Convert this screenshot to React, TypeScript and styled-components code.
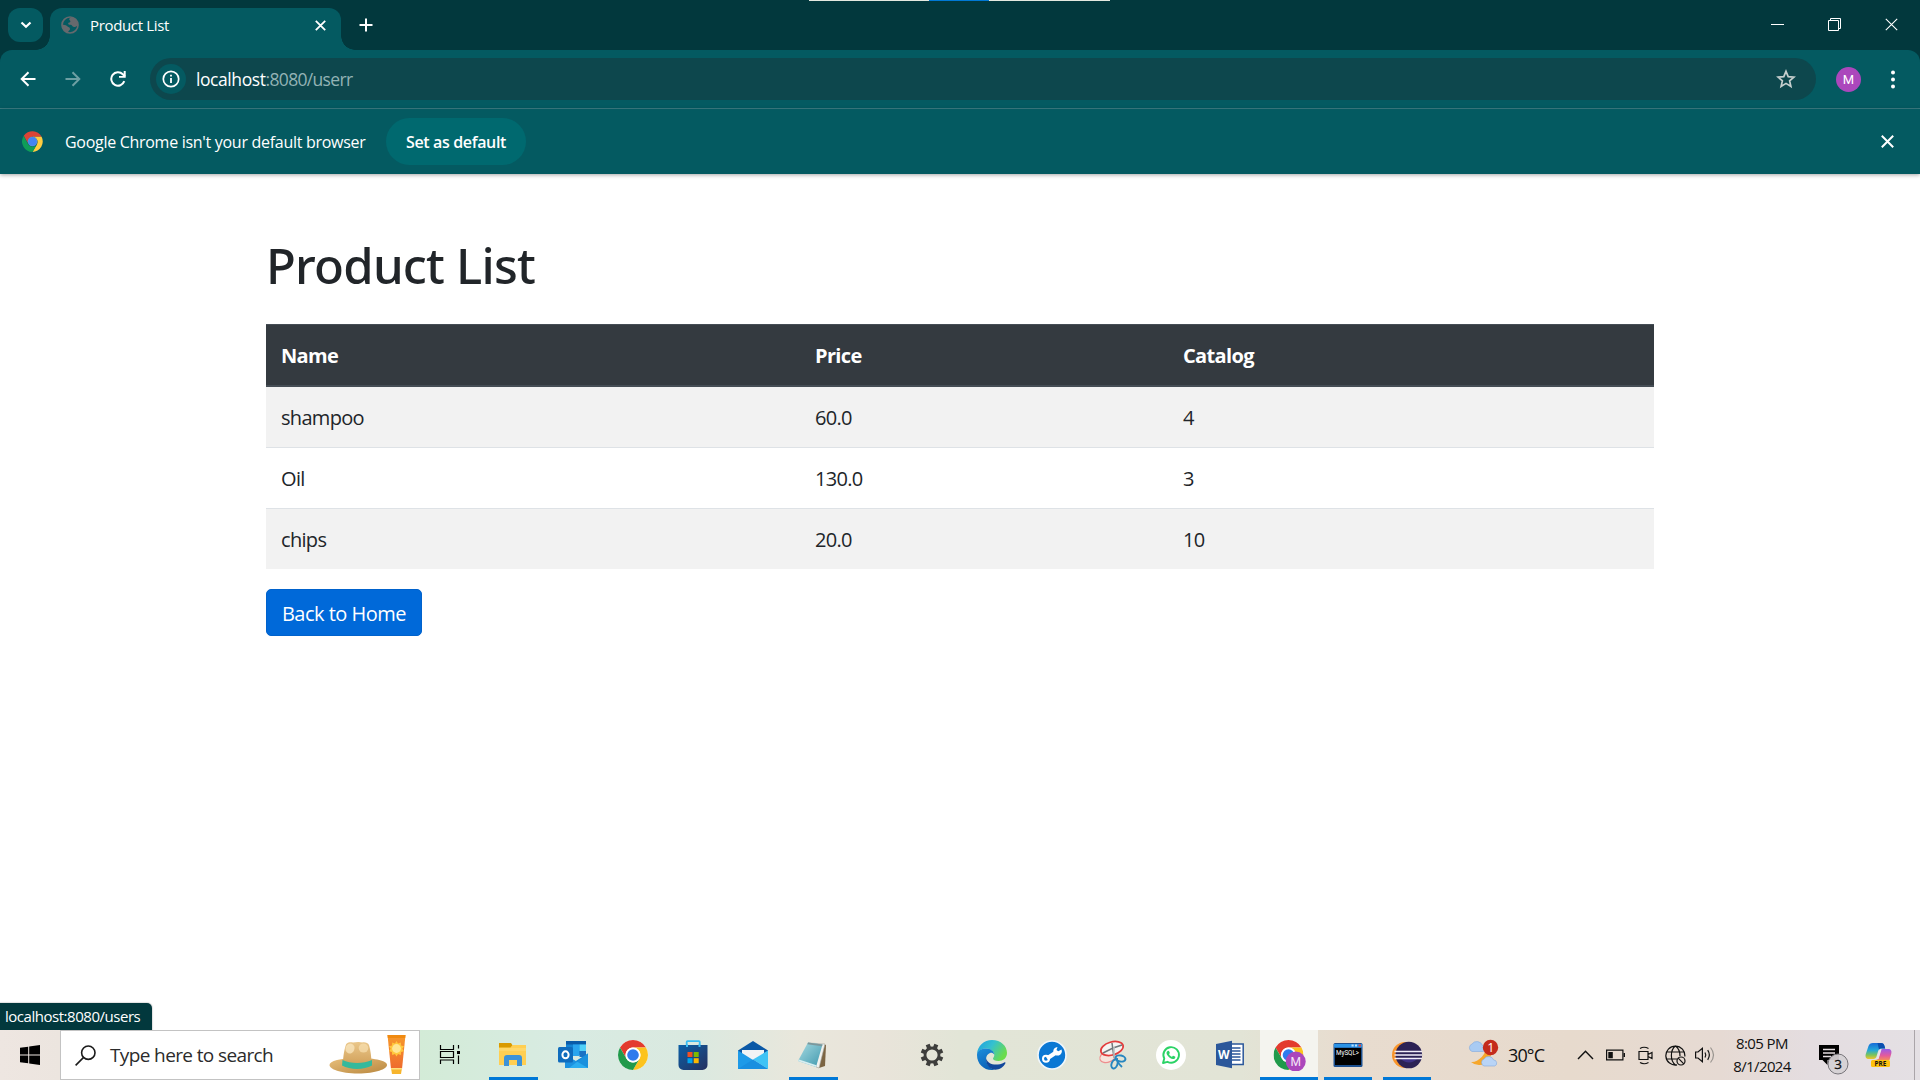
import React from 'react';
import styled, { createGlobalStyle, css } from 'styled-components';

const GlobalStyle = createGlobalStyle`
  * { box-sizing: border-box; }
  html, body { margin: 0; padding: 0; overflow: hidden; background: #fff; }
  body { font-family: 'Open Sans', 'Noto Sans', sans-serif; }
`;

const Screen = styled.div`
  width: 1920px;
  height: 1080px;
  display: flex;
  flex-direction: column;
  background: #fff;
  overflow: hidden;
  white-space: nowrap;
`;

/* ---------- browser: tab strip ---------- */

const TabStrip = styled.header`
  position: relative;
  height: 50px;
  flex: none;
  display: flex;
  align-items: flex-end;
  padding-left: 8px;
  background: #02383d;
`;

const SnapHint = styled.div`
  position: absolute;
  top: 0;
  left: 809px;
  width: 301px;
  height: 1px;
  background: linear-gradient(to right, #e4e9e0 120px, #0078d4 120px 180px, #e4e9e0 180px);
`;

const TabSearch = styled.button`
  width: 35px;
  height: 34px;
  margin: 0 7px 8px 0;
  padding: 0;
  border: 0;
  border-radius: 12px;
  background: #045a61;
  display: grid;
  place-items: center;
`;

const flare = css`
  content: '';
  position: absolute;
  bottom: 0;
  width: 14px;
  height: 14px;
`;

const Tab = styled.div`
  position: relative;
  width: 291px;
  height: 42.5px;
  display: flex;
  align-items: center;
  padding: 0 15px 7px 11px;
  border-radius: 12px 12px 0 0;
  background: #045a61;
  color: #fff;
  &::before {
    ${flare}
    right: 100%;
    background: radial-gradient(circle at 0 0, transparent 13.5px, #045a61 14px);
  }
  &::after {
    ${flare}
    left: 100%;
    background: radial-gradient(circle at 100% 0, transparent 13.5px, #045a61 14px);
  }
`;

const TabTitle = styled.span`
  flex: 1;
  margin-left: 11px;
  font-size: 15px;
  line-height: 20px;
  letter-spacing: -0.34px;
`;

const NewTab = styled.div`
  width: 50px;
  height: 50px;
  display: grid;
  place-items: center;
`;

const WindowControls = styled.div`
  margin-left: auto;
  display: flex;
  height: 50px;
`;

const WindowControl = styled.div`
  width: 57px;
  height: 49px;
  display: grid;
  place-items: center;
`;

/* ---------- browser: toolbar ---------- */

const ToolbarBack = styled.div`
  flex: none;
  background: #02383d;
`;

const Toolbar = styled.div`
  height: 59px;
  display: flex;
  align-items: center;
  padding: 0 11px 0 5px;
  border-radius: 12px 12px 0 0;
  border-bottom: 1px solid #3b7e84;
  background: #045a61;
`;

const NavButton = styled.div<{ $dim?: boolean }>`
  width: 45px;
  height: 42px;
  display: grid;
  place-items: center;
  opacity: ${(p) => (p.$dim ? 0.42 : 1)};
`;

const Omnibox = styled.div`
  flex: 1;
  height: 42px;
  margin: 0 20px 0 10px;
  display: flex;
  align-items: center;
  padding: 0 20px 0 6px;
  border-radius: 21px;
  background: #0d474d;
`;

const SiteInfo = styled.span`
  width: 30px;
  height: 30px;
  border-radius: 50%;
  background: #045a61;
  display: grid;
  place-items: center;
`;

const Url = styled.span`
  flex: 1;
  margin-left: 10px;
  font-size: 17.5px;
  line-height: 24px;
  letter-spacing: -0.42px;
  color: #fff;
`;

const UrlPath = styled.span`
  letter-spacing: -0.67px;
  color: #93b3b5;
`;

const Avatar = styled.span`
  width: 25px;
  height: 25px;
  border-radius: 50%;
  background: #ab47bc;
  color: #fff;
  font: 400 13px/25px Roboto, sans-serif;
  text-align: center;
`;

const MenuDots = styled.span`
  width: 33px;
  margin: 0 0 0 15px;
  display: grid;
  place-items: center;
`;

/* ---------- browser: info bar ---------- */

const InfoBar = styled.div`
  position: relative;
  z-index: 1;
  flex: none;
  height: 65px;
  display: flex;
  align-items: center;
  padding: 0 26px 0 22px;
  background: #045a61;
  color: #fff;
  box-shadow: 0 1px 4px rgba(0, 0, 0, 0.35);
`;

const InfoText = styled.span`
  margin-left: 22px;
  width: 321px;
  font-size: 16px;
  letter-spacing: -0.29px;
`;

const DefaultButton = styled.button`
  width: 140px;
  height: 47px;
  padding: 0;
  border: 0;
  border-radius: 24px;
  background: #00696f;
  color: #fff;
  font: 600 16px 'Open Sans', sans-serif;
  letter-spacing: -0.35px;
`;

const InfoClose = styled.div`
  margin-left: auto;
  display: grid;
`;

/* ---------- page ---------- */

const Page = styled.main`
  position: relative;
  flex: 1;
  padding: 61px 266px 0;
  color: #212529;
`;

const Heading = styled.h1`
  margin: 0 0 29px;
  font: 500 49px/60px 'Noto Sans', sans-serif;
  letter-spacing: -0.77px;
`;

const ProductTable = styled.div`
  display: flex;
  flex-direction: column;
  font-size: 20px;
  line-height: 30px;
`;

const Row = styled.div<{ $head?: boolean; $striped?: boolean; $first?: boolean }>`
  display: grid;
  grid-template-columns: 534px 368px 1fr;
  padding: 16px 0 14px;
  letter-spacing: -0.68px;
  border-top: ${(p) => (p.$first ? '0' : '1px solid #dee2e6')};
  background: ${(p) => (p.$striped ? '#f2f2f2' : '#fff')};
  ${(p) =>
    p.$head &&
    css`
      border-top: 1px solid #454d55;
      border-bottom: 2px solid #454d55;
      background: #343a40;
      color: #fff;
      font-weight: 700;
      letter-spacing: -0.65px;
    `}
`;

const Cell = styled.span`
  padding-left: 15px;
`;

const HomeButton = styled.a`
  display: inline-block;
  margin-top: 20px;
  width: 156px;
  height: 47px;
  border: 1px solid #0062cc;
  border-radius: 5px;
  background: #0069d9;
  color: #fff;
  font-size: 20px;
  line-height: 47px;
  text-align: center;
  letter-spacing: -0.51px;
`;

const StatusBubble = styled.div`
  position: absolute;
  left: 0;
  bottom: 0;
  width: 152px;
  height: 27px;
  padding-left: 5px;
  border-radius: 0 5px 0 0;
  background: #02383d;
  box-shadow: 0 0 1px 1px rgba(0, 0, 0, 0.12);
  color: #fff;
  font-size: 15px;
  line-height: 27px;
  letter-spacing: -0.47px;
`;

/* ---------- taskbar ---------- */

const Taskbar = styled.footer`
  position: relative;
  z-index: 1;
  flex: none;
  height: 50px;
  display: flex;
  background: linear-gradient(
    to right,
    #eee6e1 0, #ece5df 60px, #d3ebd7 420px, #d8ebe2 560px, #dae9e0 690px, #e9e7dc 800px,
    #e9e4da 880px, #e2e5d7 960px, #e2e4d6 1240px, #e8dccf 1350px, #e7dacd 1570px,
    #e6dad3 1720px, #e4dde0 1810px, #e4e0e4 1920px
  );
`;

const StartButton = styled.div`
  width: 60px;
  display: grid;
  place-items: center;
`;

const SearchBox = styled.div`
  width: 360px;
  display: flex;
  align-items: center;
  padding: 0 12px 0 14px;
  border: 1px solid #c3c3c3;
  background: #fff;
`;

const SearchHint = styled.span`
  flex: 1;
  margin-left: 14px;
  font-size: 19px;
  line-height: 26px;
  letter-spacing: -0.62px;
  color: #2b2b2b;
`;

const Slot = styled.div<{ $w?: number; $gap?: number; $active?: boolean }>`
  width: ${(p) => p.$w ?? 60}px;
  margin-left: ${(p) => p.$gap ?? 0}px;
  flex: none;
  display: flex;
  flex-direction: column;
  align-items: center;
  padding-top: 9px;
  background: ${(p) => (p.$active ? '#f4f4ef' : 'transparent')};
`;

const Running = styled.div<{ $w?: number }>`
  width: ${(p) => p.$w ?? 49}px;
  height: 3px;
  margin-top: 6px;
  background: #0078d7;
`;

const Weather = styled.div`
  margin-left: 31px;
  width: 105px;
  display: flex;
  align-items: center;
  font-size: 18px;
  letter-spacing: -0.86px;
  color: #111;
`;

const Temperature = styled.span`
  margin-left: 9px;
`;

const Tray = styled.div`
  width: 148px;
  display: flex;
  align-items: center;
`;

const Clock = styled.div`
  width: 84px;
  display: flex;
  flex-direction: column;
  align-items: center;
  padding-top: 2px;
  font-size: 15px;
  line-height: 23px;
  letter-spacing: -0.6px;
  color: #111;
`;

const TrayIcon = styled.div<{ $w: number }>`
  width: ${(p) => p.$w}px;
  display: grid;
  place-items: center;
`;

const Notifications = styled.div`
  width: 46px;
  margin-left: 7px;
  padding-top: 8px;
  display: grid;
  place-items: center;
`;

const ShowDesktop = styled.div`
  margin-left: auto;
  width: 6px;
  border-left: 1px solid #aaa5a9;
`;

/* ---------- icons ---------- */

const Icon = ({ size = 32, children }: { size?: number; children: React.ReactNode }) => (
  <svg width={size} height={size} viewBox="0 0 32 32" fill="none" display="block">
    {children}
  </svg>
);

const Cross = ({ size, width = 1.9 }: { size: number; width?: number }) => (
  <svg width={size} height={size} viewBox={`0 0 ${size} ${size}`} stroke="#fff" strokeWidth={width}>
    <path d={`M.8 .8 ${size - 0.8} ${size - 0.8}M${size - 0.8} .8 .8 ${size - 0.8}`} />
  </svg>
);

const ChromeMark = ({ size }: { size: number }) => (
  <svg width={size} height={size} viewBox="0 0 48 48" display="block">
    <circle cx="24" cy="24" r="24" fill="#fff" />
    <path d="M24 12h20.78A24 24 0 0 0 3.22 12l10.39 18A12 12 0 0 1 24 12z" fill="#e33b2e" />
    <path d="M34.39 30 24 48A24 24 0 0 0 44.78 12H24a12 12 0 0 1 10.39 18z" fill="#fcc31e" />
    <path d="M13.61 30 3.22 12A24 24 0 0 0 24 48l10.39-18a12 12 0 0 1-20.78 0z" fill="#219a4b" />
    <circle cx="24" cy="24" r="12" fill="#fff" />
    <circle cx="24" cy="24" r="9.3" fill="#2f7bed" />
  </svg>
);

const TaskbarChrome = () => (
  <Icon>
    <g transform="translate(1 1)"><ChromeMark size={30} /></g>
  </Icon>
);

const InfoChrome = () => (
  <svg width="21" height="21" viewBox="0 0 48 48" display="block">
    <path d="M24 13h20.8A24 24 0 0 0 4 11l10 18A12 12 0 0 1 24 13z" fill="#db4437" />
    <path d="M34.39 30 24 48A24 24 0 0 0 44.78 13H24a12 12 0 0 1 10.39 17z" fill="#ffcd40" />
    <path d="M14 30 4 11A24 24 0 0 0 24 48l10.39-18A12 12 0 0 1 14 30z" fill="#0f9d58" />
    <circle cx="24" cy="24" r="11" fill="#5b8fe0" />
    <circle cx="24" cy="24" r="9" fill="#4285f4" />
  </svg>
);

const SearchArt = () => (
  <svg width="78" height="44" viewBox="0 0 78 44" display="block">
    <defs>
      <linearGradient id="brim" x1="0" y1="0" x2="1" y2="1">
        <stop stopColor="#e8c07c" />
        <stop offset="1" stopColor="#b9873f" />
      </linearGradient>
      <linearGradient id="crown" x1="0" y1="0" x2="0" y2="1">
        <stop stopColor="#eac78a" />
        <stop offset="1" stopColor="#cf9d56" />
      </linearGradient>
      <linearGradient id="tube" x1="0" y1="0" x2="0" y2="1">
        <stop stopColor="#f79a2c" />
        <stop offset="1" stopColor="#ee6a2e" />
      </linearGradient>
    </defs>
    <path d="M.5 32C.5 28 11 25 29 25s29 3 29 7-11 8.500-29 8.500S.5 36 .5 32z" fill="url(#brim)" />
    <path d="M14 31c0-8 1.500-15 3-19.500 1-2.500 5-2.500 7-2 3-.8 7-.8 9 0 3-.6 6 .2 7 2.500 1.500 5 2.500 12 2.500 19-8 4-21 4-28.500 0z" fill="url(#crown)" />
    <path d="M13.500 27c8 4 21 4 29.500 0v5.500c-8 4.500-22 4.500-30 0z" fill="#35b99c" />
    <ellipse cx="21" cy="15.500" rx="4.500" ry="5" fill="#fbe9c5" opacity=".7" transform="rotate(20 21 15.500)" />
    <ellipse cx="34.500" cy="15" rx="4.800" ry="4.500" fill="#f8dfb0" opacity=".7" />
    <path d="M58.500 2h18L73 36H62z" fill="url(#tube)" />
    <path d="M58.500 2h18l-.3 3H58.800z" fill="#f08a10" />
    <path d="m67.500 8 1.500 2.500 2.800-1 .2 3 3 .8-1.700 2.500 1.700 2.500-3 .8-.2 3-2.800-1-1.500 2.500-1.500-2.500-2.800 1-.2-3-3-.8 1.700-2.500-1.700-2.500 3-.8.2-3 2.800 1z" fill="#ffc83d" />
    <circle cx="67.500" cy="15.500" r="4.400" fill="#ffe694" />
    <path d="M62 35h11l-1 6H63z" fill="#f7b52d" />
    <path d="M62 35h11v1.500H62z" fill="#ffdf7c" />
  </svg>
);

const Explorer = () => (
  <Icon>
    <path d="M2 4h12l2 3-2 3H2z" fill="#d99a00" />
    <path d="M2 8.500h11.500L15.500 6H29v20H2z" fill="#ffcf52" />
    <path d="M2 9h27v3H2z" fill="#ffdc78" opacity=".6" />
    <path d="M7 27v-8a3 3 0 0 1 3-3h12a3 3 0 0 1 3 3v8h-5v-6h-8v6z" fill="#3d93d8" />
  </Icon>
);

const Outlook = () => (
  <Icon>
    <path d="M9 2h20v14H9z" fill="#1384d4" />
    <path d="M9 2h20v3.500H9z" fill="#0a5ba8" />
    <path d="M16 5.500h6.500V11H16zM16 11h6.500v6H16z" fill="#2aa5ee" />
    <path d="M22.500 5.500H29V12h-6.500z" fill="#50d0f8" />
    <path d="M22.500 12H29v6h-6.500z" fill="#1a72c4" />
    <path d="M8 16 19 22l12-7.500V29H8z" fill="#1b91e0" />
    <path d="M31 14.500V29H12z" fill="#2badf0" />
    <path d="M31 14.500V29l-12-7z" fill="#1181d2" opacity=".65" />
    <rect x="1" y="8" width="15" height="15.500" rx="1.500" fill="#0f6cbd" />
    <ellipse cx="8.500" cy="15.800" rx="3.100" ry="3.500" stroke="#fff" strokeWidth="2" />
  </Icon>
);

const Store = () => (
  <Icon>
    <defs>
      <linearGradient id="store" x1="0" y1="0" x2="1" y2="1">
        <stop stopColor="#0b5fa6" />
        <stop offset="1" stopColor="#26305f" />
      </linearGradient>
    </defs>
    <path d="M9.700 8V3a.8.8 0 0 1 .8-.8h11.400a.8.8 0 0 1 .8.800v5" stroke="#3bbcf2" strokeWidth="1.800" />
    <path d="M1.500 6h29v20a5 5 0 0 1-5 5h-19a5 5 0 0 1-5-5z" fill="url(#store)" />
    <path d="M9 5.500h2V8H9zM21.500 5.500h2V8h-2z" fill="#3bbcf2" />
    <path d="M10.500 13h5v5h-5z" fill="#f25022" />
    <path d="M16.700 13h5v5h-5z" fill="#7fba00" />
    <path d="M10.500 19.200h5v5h-5z" fill="#00a4ef" />
    <path d="M16.700 19.200h5v5h-5z" fill="#ffb900" />
  </Icon>
);

const Mail = () => (
  <Icon>
    <path d="M1 11.500 16 2l15 9.500V14H1z" fill="#0a58a6" />
    <path d="M5 11h22v4L16 22 5 15z" fill="#f1f3f5" />
    <path d="M1 11.500 16 21l15 9H1z" fill="#1d9ae8" />
    <path d="M31 11.500V30L16 20.500z" fill="#3fc3f5" />
    <path d="M1 30 16 20.500 31 30z" fill="#188fe0" />
  </Icon>
);

const Notepad = () => (
  <Icon>
    <defs>
      <linearGradient id="note" x1="0" y1="0" x2="1" y2="1">
        <stop stopColor="#a8dbe2" />
        <stop offset="1" stopColor="#3f98ae" />
      </linearGradient>
    </defs>
    <path d="m26 5 3 1-1 21-6 2z" fill="#7c6543" />
    <path d="m11 4 17 1-6 24-3-1z" fill="#f2f2ee" stroke="#a3a59e" strokeWidth=".6" />
    <path d="m11 3.500 14.500 2L19 28 1 22z" fill="url(#note)" />
    <path d="m11 3.500 14.500 2-.5 1.800-14.500-2z" fill="#7c979b" />
    <path d="m1 22 18 6 .5-1.800L2 20.500z" fill="#d7eef1" />
  </Icon>
);

const GearIcon = () => (
  <Icon>
    <g stroke="#3e3e3c" strokeWidth="4.200">
      {[22.5, 67.5, 112.5, 157.5].map((a) => (
        <path key={a} d="M16 4.700v5M16 22.300v5" transform={`rotate(${a} 16 16)`} />
      ))}
    </g>
    <circle cx="16" cy="16" r="7" stroke="#3e3e3c" strokeWidth="2.800" />
  </Icon>
);

const Edge = () => (
  <Icon>
    <defs>
      <linearGradient id="edgeTop" x1="0" y1="0" x2="1" y2=".5">
        <stop stopColor="#1b9de2" />
        <stop offset=".5" stopColor="#35c1cf" />
        <stop offset="1" stopColor="#6bdc4b" />
      </linearGradient>
      <linearGradient id="edgeSide" x1="0" y1="0" x2=".4" y2="1">
        <stop stopColor="#1b8fdc" />
        <stop offset="1" stopColor="#0c63b8" />
      </linearGradient>
    </defs>
    <path d="M1 15C1.500 7 8 1 16 1c9 0 15 6 15 13 0 5-4 8-8.500 8-3.500 0-5.500-1.200-5.500-2.300 0-.9 1.300-1.600 1.300-3.700 0-3.500-3.500-6.500-8.300-6.500C5.500 9.500 2 12 1 15z" fill="url(#edgeTop)" />
    <path d="M1 16c0-4 4-6.500 9-6.500 4.800 0 8.300 3 8.300 6.200-1-1.700-3-2.200-4.300-1.700-3 1-4.500 4.500-3.700 8 .9 4.500 4.500 7.500 8.200 8.700C9.500 32.500 1 26 1 16z" fill="url(#edgeSide)" />
    <path d="M10.200 19.500c-.8 6 4 11 9.300 11.200 4 0 8-2.700 9.800-6.200.5-1-.3-1.500-1-1.100C20.500 27.500 11.500 25.500 10.200 19.500z" fill="#11479b" />
  </Icon>
);

const Wrench = () => (
  <Icon>
    <circle cx="16" cy="16" r="14" fill="#0b78d4" stroke="#f0f7fc" strokeWidth="1.600" />
    <path d="m11 19.500 9-6" stroke="#fff" strokeWidth="4.200" />
    <circle cx="10" cy="19.700" r="3" stroke="#fff" strokeWidth="2" />
    <path d="M25.500 10.500a4.300 4.300 0 1 1-4-2.500l-1 3 1.800 1.300z" fill="#fff" />
  </Icon>
);

const Snip = () => (
  <Icon>
    <ellipse cx="12" cy="17.500" rx="8.500" ry="5.500" transform="rotate(-22 12 17.500)" stroke="#ee8e8e" strokeWidth="1.200" fill="#f6e4dc" />
    <ellipse cx="16" cy="9.500" rx="11.500" ry="6.500" transform="rotate(-16 16 9.500)" stroke="#e33c3c" strokeWidth="1.700" fill="#f5f4f2" />
    <path d="m16 4 2 15M7 14l10-5 9-3" stroke="#70777a" strokeWidth="1.500" />
    <path d="M18 8v11" stroke="#bbc1c3" strokeWidth="1.500" />
    <ellipse cx="24.500" cy="19.500" rx="5" ry="3" transform="rotate(12 24.500 19.500)" stroke="#2686c0" strokeWidth="2" />
    <ellipse cx="18.500" cy="25" rx="2.900" ry="4.600" transform="rotate(20 18.500 25)" stroke="#2686c0" strokeWidth="2" />
    <path d="M21 19c0 4 1 5 5 9" stroke="#2686c0" strokeWidth="1.800" />
  </Icon>
);

const WhatsApp = () => (
  <Icon>
    <circle cx="16" cy="16" r="15" fill="#fff" />
    <path d="m8 24 1.300-4.400A7.800 7.800 0 1 1 12.500 22.800z" stroke="#2bd366" strokeWidth="1.900" strokeLinejoin="round" />
    <path d="M13 11.800c.6-.3 1 0 1.200.6l.6 1.400c.2.500-.6 1-.7 1.400.6 1.300 1.600 2.100 2.900 2.600.4-.3.8-1.200 1.300-1l1.700.8c.5.300.4 1.100 0 1.600-1.200 1.400-3.300 1-5-.2-1.500-1-3.300-3-3.500-4.700-.1-1 .6-2.100 1.500-2.500z" fill="#2bd366" />
  </Icon>
);

const LetterLabel = styled.text`
  font-family: 'Open Sans', sans-serif;
  font-weight: 700;
`;

const Word = () => (
  <Icon>
    <path d="M16 5h13.200v20.500H16z" fill="#fff" stroke="#2b579a" strokeWidth="1.500" />
    <path d="M18 9h8.500M18 12h8.500M18 15h8.500M18 18h8.500M18 21h8.500" stroke="#2b579a" strokeWidth="1.500" />
    <path d="m2 5 16-3.200v27.400L2 26z" fill="#2b579a" />
    <LetterLabel x="4" y="20" fontSize="12" fill="#fff">W</LetterLabel>
  </Icon>
);

const ChromeProfile = () => (
  <svg width="34" height="32" viewBox="0 0 34 32" display="block">
    <g transform="translate(1.500 1)"><ChromeMark size={30} /></g>
    <circle cx="23.700" cy="22.500" r="10" fill="#ab47bc" />
    <text x="23.700" y="26.800" fontSize="12" fill="#f5e6f8" textAnchor="middle" fontFamily="Roboto, sans-serif">M</text>
  </svg>
);

const MySql = () => (
  <Icon>
    <rect x="1.500" y="4" width="29" height="24" rx="1.500" fill="#1d508f" />
    <path d="M2 5h28v3.500H2z" fill="#2b93e6" />
    <path d="M19.500 5.500h2.200v2h-2.200zM23 5.500h2v2h-2z" fill="#bfe0fb" />
    <path d="M26.500 5.500h2.500v2h-2.500z" fill="#e2453c" />
    <path d="M3 9h26v17H3z" fill="#000" />
    <text x="4" y="16.300" fontSize="7" fill="#fff" textLength="23" lengthAdjust="spacingAndGlyphs" fontFamily="Roboto, sans-serif">MySQL&gt;</text>
  </Icon>
);

const Eclipse = () => (
  <Icon>
    <circle cx="14" cy="16" r="13" fill="#f8942a" />
    <circle cx="17.800" cy="16" r="13.300" fill="#2c2255" />
    <path d="M10 20h16a11 11 0 0 1-16 0z" fill="#46399a" opacity=".7" />
    <path d="M3.500 12.500h27.500M3.500 16h27.500M3.500 19.500h27.500" stroke="#f2effa" strokeWidth="1.700" />
  </Icon>
);

const WeatherIcon = () => (
  <svg width="32" height="32" viewBox="0 0 32 32" display="block">
    <path d="M20 5a12 12 0 1 1-16 18c6 1 16-7 16-18z" fill="#f6a72c" />
    <path d="M5 12.500a4 4 0 0 1 0-7.500 6 6 0 0 1 10.500 1.500 3.200 3.200 0 0 1 1 6z" fill="#a9cbf3" stroke="#7fa9df" strokeWidth=".6" />
    <path d="M17 27a3.700 3.700 0 0 1 0-7 5.500 5.500 0 0 1 9.700 1 3.100 3.100 0 0 1 1 6z" fill="#b9d4f6" stroke="#7fa9df" strokeWidth=".6" />
    <circle cx="23.500" cy="8.500" r="7.700" fill="#c42b1c" />
    <text x="23.500" y="13" fontSize="12.500" textAnchor="middle" fill="#fff" fontFamily="Open Sans, sans-serif">1</text>
  </svg>
);

const Copilot = () => (
  <Icon>
    <defs>
      <linearGradient id="cpLeft" x1="0" y1="0" x2="0" y2="1">
        <stop stopColor="#176bd8" />
        <stop offset=".45" stopColor="#23a8d8" />
        <stop offset=".75" stopColor="#7cc45c" />
        <stop offset="1" stopColor="#f1c52e" />
      </linearGradient>
      <linearGradient id="cpRight" x1="0" y1="0" x2="0" y2="1">
        <stop stopColor="#9a5be8" />
        <stop offset=".6" stopColor="#e45a9c" />
        <stop offset="1" stopColor="#f58a5c" />
      </linearGradient>
    </defs>
    <path d="M10 4h8c2 0 3 1 3.500 3l.7 2.500h-3.700c-2 0-3 1-3.500 3l-1.500 5c-.5 1.500-1.500 2.500-3 2.500H6c-3 0-4-2-3.200-5l2.700-8C6.300 5 7.500 4 10 4z" fill="url(#cpLeft)" />
    <path d="M18 4c2 0 3 1 3.500 3l.7 2.500h-3.700c-1 0-2 .5-2.500 1L14.500 4z" fill="#0b4fae" />
    <path d="M19.500 10H25c3 0 4 2 3.200 5l-1.700 6H12.500c2 0 2.800-1 3.300-2.800l1.700-6.200c.4-1.300 1-2 2-2z" fill="url(#cpRight)" />
    <path d="M18.500 10.500 15.500 20h-2.700c1-.5 1.300-1.200 1.700-2.500l1.500-5c.4-1.300 1.200-2 2.500-2z" fill="#e9e4ea" />
    <rect x="8" y="21" width="19" height="7" rx="1.500" fill="#ffc20e" />
    <LetterLabel x="17.500" y="26.900" fontSize="6.400" fill="#111" textAnchor="middle">PRE</LetterLabel>
  </Icon>
);

const products = [
  { name: 'shampoo', price: '60.0', catalog: '4' },
  { name: 'Oil', price: '130.0', catalog: '3' },
  { name: 'chips', price: '20.0', catalog: '10' },
];

export default function App() {
  return (
    <Screen>
      <GlobalStyle />

      <TabStrip>
        <SnapHint />
        <TabSearch>
          <svg width="12" height="8" viewBox="0 0 12 8" fill="none" stroke="#fff" strokeWidth="2.200">
            <path d="m1.500 1.500 4.500 4.300 4.500-4.300" />
          </svg>
        </TabSearch>
        <Tab>
          <svg width="18" height="18" viewBox="0 0 18 18" fill="none">
            <circle cx="9" cy="9" r="8" stroke="#66696d" strokeWidth="1.700" />
            <path d="M10.500 1.200C8 2 7.500 3.500 9 4.500c1 1 0 2.300-1.500 2.300-1 1.700.5 2 2 2 1.700 0 1.500 2.200 3.500 2.200 1.600 0 2.500-.7 4-1.500V8C16 4 14 2 10.500 1.200zM1 8.500c2 .5 3.500 0 5 1.500 1 1.200 3 1 3 3 0 1.500-2 1.500-2 4C3.500 16 1 13 1 8.500z" fill="#66696d" />
          </svg>
          <TabTitle>Product List</TabTitle>
          <Cross size={11} width={1.8} />
        </Tab>
        <NewTab>
          <svg width="14" height="14" viewBox="0 0 14 14" stroke="#fff" strokeWidth="2">
            <path d="M7 .5v13M.5 7h13" />
          </svg>
        </NewTab>
        <WindowControls>
          <WindowControl>
            <svg width="13" height="13" viewBox="0 0 13 13"><path d="M0 6h13v1H0z" fill="#fff" /></svg>
          </WindowControl>
          <WindowControl>
            <svg width="13" height="13" viewBox="0 0 13 13" fill="none" stroke="#fff">
              <path d="M.5 2.500h10v10H.5zM2.500 2.500v-2h10v10h-2" />
            </svg>
          </WindowControl>
          <WindowControl>
            <Cross size={13} width={1.1} />
          </WindowControl>
        </WindowControls>
      </TabStrip>

      <ToolbarBack>
        <Toolbar>
          <NavButton>
            <svg width="16" height="16" viewBox="0 0 16 16" fill="none" stroke="#fff" strokeWidth="2">
              <path d="M15.500 8H2M8.500 1.200 1.700 8l6.800 6.800" />
            </svg>
          </NavButton>
          <NavButton $dim>
            <svg width="16" height="16" viewBox="0 0 16 16" fill="none" stroke="#fff" strokeWidth="2">
              <path d="M.5 8H14M7.500 1.200 14.300 8l-6.800 6.800" />
            </svg>
          </NavButton>
          <NavButton>
            <svg width="16" height="16" viewBox="0 0 16 16" fill="none">
              <path d="M14.300 10.200A6.700 6.700 0 1 1 12.800 3.300L15 5.500" stroke="#fff" strokeWidth="2" />
              <path d="M15.700 0v6.800H9V5h4.700V0z" fill="#fff" />
            </svg>
          </NavButton>
          <Omnibox>
            <SiteInfo>
              <svg width="18" height="18" viewBox="0 0 18 18" fill="none">
                <circle cx="9" cy="9" r="7.700" stroke="#fff" strokeWidth="1.700" />
                <path d="M8.100 8h1.800v5H8.100zM8.100 4.800h1.800v1.800H8.100z" fill="#fff" />
              </svg>
            </SiteInfo>
            <Url>
              localhost<UrlPath>:8080/userr</UrlPath>
            </Url>
            <svg width="20" height="20" viewBox="0 0 20 20" fill="none" stroke="#c6cfce" strokeWidth="1.700">
              <path d="m10 2.300 2.200 5.300 5.700.5-4.300 3.700 1.300 5.600-4.900-3-4.900 3 1.300-5.600L2.100 8.100l5.700-.5z" />
            </svg>
          </Omnibox>
          <Avatar>M</Avatar>
          <MenuDots>
            <svg width="4" height="19" viewBox="0 0 4 19" fill="#fff">
              <circle cx="2" cy="2.500" r="2" />
              <circle cx="2" cy="9.500" r="2" />
              <circle cx="2" cy="16.500" r="2" />
            </svg>
          </MenuDots>
        </Toolbar>
      </ToolbarBack>

      <InfoBar>
        <InfoChrome />
        <InfoText>Google Chrome isn't your default browser</InfoText>
        <DefaultButton>Set as default</DefaultButton>
        <InfoClose>
          <Cross size={13} width={2} />
        </InfoClose>
      </InfoBar>

      <Page>
        <Heading>Product List</Heading>
        <ProductTable>
          <Row $head>
            <Cell>Name</Cell>
            <Cell>Price</Cell>
            <Cell>Catalog</Cell>
          </Row>
          {products.map((p, i) => (
            <Row key={p.name} $first={i === 0} $striped={i % 2 === 0}>
              <Cell>{p.name}</Cell>
              <Cell>{p.price}</Cell>
              <Cell>{p.catalog}</Cell>
            </Row>
          ))}
        </ProductTable>
        <HomeButton>Back to Home</HomeButton>
        <StatusBubble>localhost:8080/users</StatusBubble>
      </Page>

      <Taskbar>
        <StartButton>
          <svg width="20" height="20" viewBox="0 0 20 20" fill="#000">
            <path d="M0 2.800 8.200 1.700v7.800H0zM9.200 1.500 20 0v9.500H9.200zM0 10.500h8.200v7.800L0 17.200zM9.200 10.500H20V20L9.200 18.500z" />
          </svg>
        </StartButton>
        <SearchBox>
          <svg width="21" height="21" viewBox="0 0 21 21" fill="none" stroke="#1b1b1b" strokeWidth="1.600">
            <circle cx="13.300" cy="7.700" r="6.700" />
            <path d="M8.600 12.400.6 20.400" />
          </svg>
          <SearchHint>Type here to search</SearchHint>
          <SearchArt />
        </SearchBox>
        <Slot>
          <Icon>
            <path d="M6.500 6v4.500h13V6M6.500 25v-4h13v4M6.500 12.500h13v6h-13z" stroke="#000" strokeWidth="1.200" />
            <path d="M24.500 6v3.500M24.500 16.500V25" stroke="#000" strokeWidth="1.200" />
            <path d="M23 12h3v3h-3z" fill="#000" />
          </Icon>
        </Slot>
        <Slot $gap={3}><Explorer /><Running /></Slot>
        <Slot><Outlook /></Slot>
        <Slot><TaskbarChrome /></Slot>
        <Slot><Store /></Slot>
        <Slot><Mail /></Slot>
        <Slot><Notepad /><Running /></Slot>
        <Slot $gap={59}><GearIcon /></Slot>
        <Slot><Edge /></Slot>
        <Slot><Wrench /></Slot>
        <Slot $w={59}><Snip /></Slot>
        <Slot $w={59}><WhatsApp /></Slot>
        <Slot $w={59}><Word /></Slot>
        <Slot $w={58} $gap={1} $active><ChromeProfile /><Running $w={58} /></Slot>
        <Slot $w={59}><MySql /><Running $w={48} /></Slot>
        <Slot $w={59}><Eclipse /><Running $w={48} /></Slot>
        <Weather>
          <WeatherIcon />
          <Temperature>30°C</Temperature>
        </Weather>
        <Tray>
          <TrayIcon $w={26}>
            <svg width="17" height="10" viewBox="0 0 17 10" fill="none" stroke="#111" strokeWidth="1.400">
              <path d="M1 9 8.500 1.200 16 9" />
            </svg>
          </TrayIcon>
          <TrayIcon $w={34}>
            <svg width="19" height="12" viewBox="0 0 19 12" fill="none">
              <path d="M.6 1.100h16.300v9.800H.6z" stroke="#111" strokeWidth="1.200" />
              <path d="M2.300 3h4.500v6.200H2.300zM17.500 4H19v4h-1.500z" fill="#111" />
            </svg>
          </TrayIcon>
          <TrayIcon $w={27}>
            <svg width="15" height="19" viewBox="0 0 15 19" fill="none" stroke="#111" strokeWidth="1.200">
              <path d="M1 5.500h9v8H1zM10 8.500l4-2v6l-4-2M2 2.500q4-2.500 8.500 0M2 16.500q4 2.500 8.500 0" />
            </svg>
          </TrayIcon>
          <TrayIcon $w={32}>
            <svg width="21" height="21" viewBox="0 0 21 21" fill="none" stroke="#111" strokeWidth="1.200">
              <path d="M19.800 11.500A9.500 9.500 0 1 0 12 19.900M1.500 7h18M1.500 14H12M10.500 1c-5.500 4-5.500 15 0 19M10.500 1c3.500 2.500 4.500 6 4.500 10" />
              <circle cx="16" cy="16" r="4" />
              <path d="m13.200 13.200 5.600 5.600" />
            </svg>
          </TrayIcon>
          <TrayIcon $w={28}>
            <svg width="20" height="18" viewBox="0 0 20 18" fill="none" stroke="#111" strokeWidth="1.200">
              <path d="M.6 6H3l4.400-3.800v13.600L3 12H.6zM10 6.500q1.600 2.500 0 5M12.700 4.200q3.300 4.800 0 9.600" />
              <path d="M15.500 1.500q6 7.500 0 15" stroke="#9a9590" />
            </svg>
          </TrayIcon>
        </Tray>
        <Clock>
          <span>8:05 PM</span>
          <span>8/1/2024</span>
        </Clock>
        <Notifications>
          <svg width="32" height="34" viewBox="0 0 32 34" fill="none">
            <path d="M1 3h20v15H9.500V23l-5-5H1z" fill="#000" />
            <path d="M5 7.500h12M5 11h12M5 14.500h8" stroke="#e4dde0" strokeWidth="1.300" />
            <circle cx="20" cy="22" r="10" fill="#d5d1d4" fillOpacity=".93" stroke="#77757a" />
            <text x="20" y="27" fontSize="13.500" fill="#111" stroke="#111" strokeWidth=".3" textAnchor="middle" fontFamily="Open Sans, sans-serif">3</text>
          </svg>
        </Notifications>
        <TrayIcon $w={44}>
          <Copilot />
        </TrayIcon>
        <ShowDesktop />
      </Taskbar>
    </Screen>
  );
}
